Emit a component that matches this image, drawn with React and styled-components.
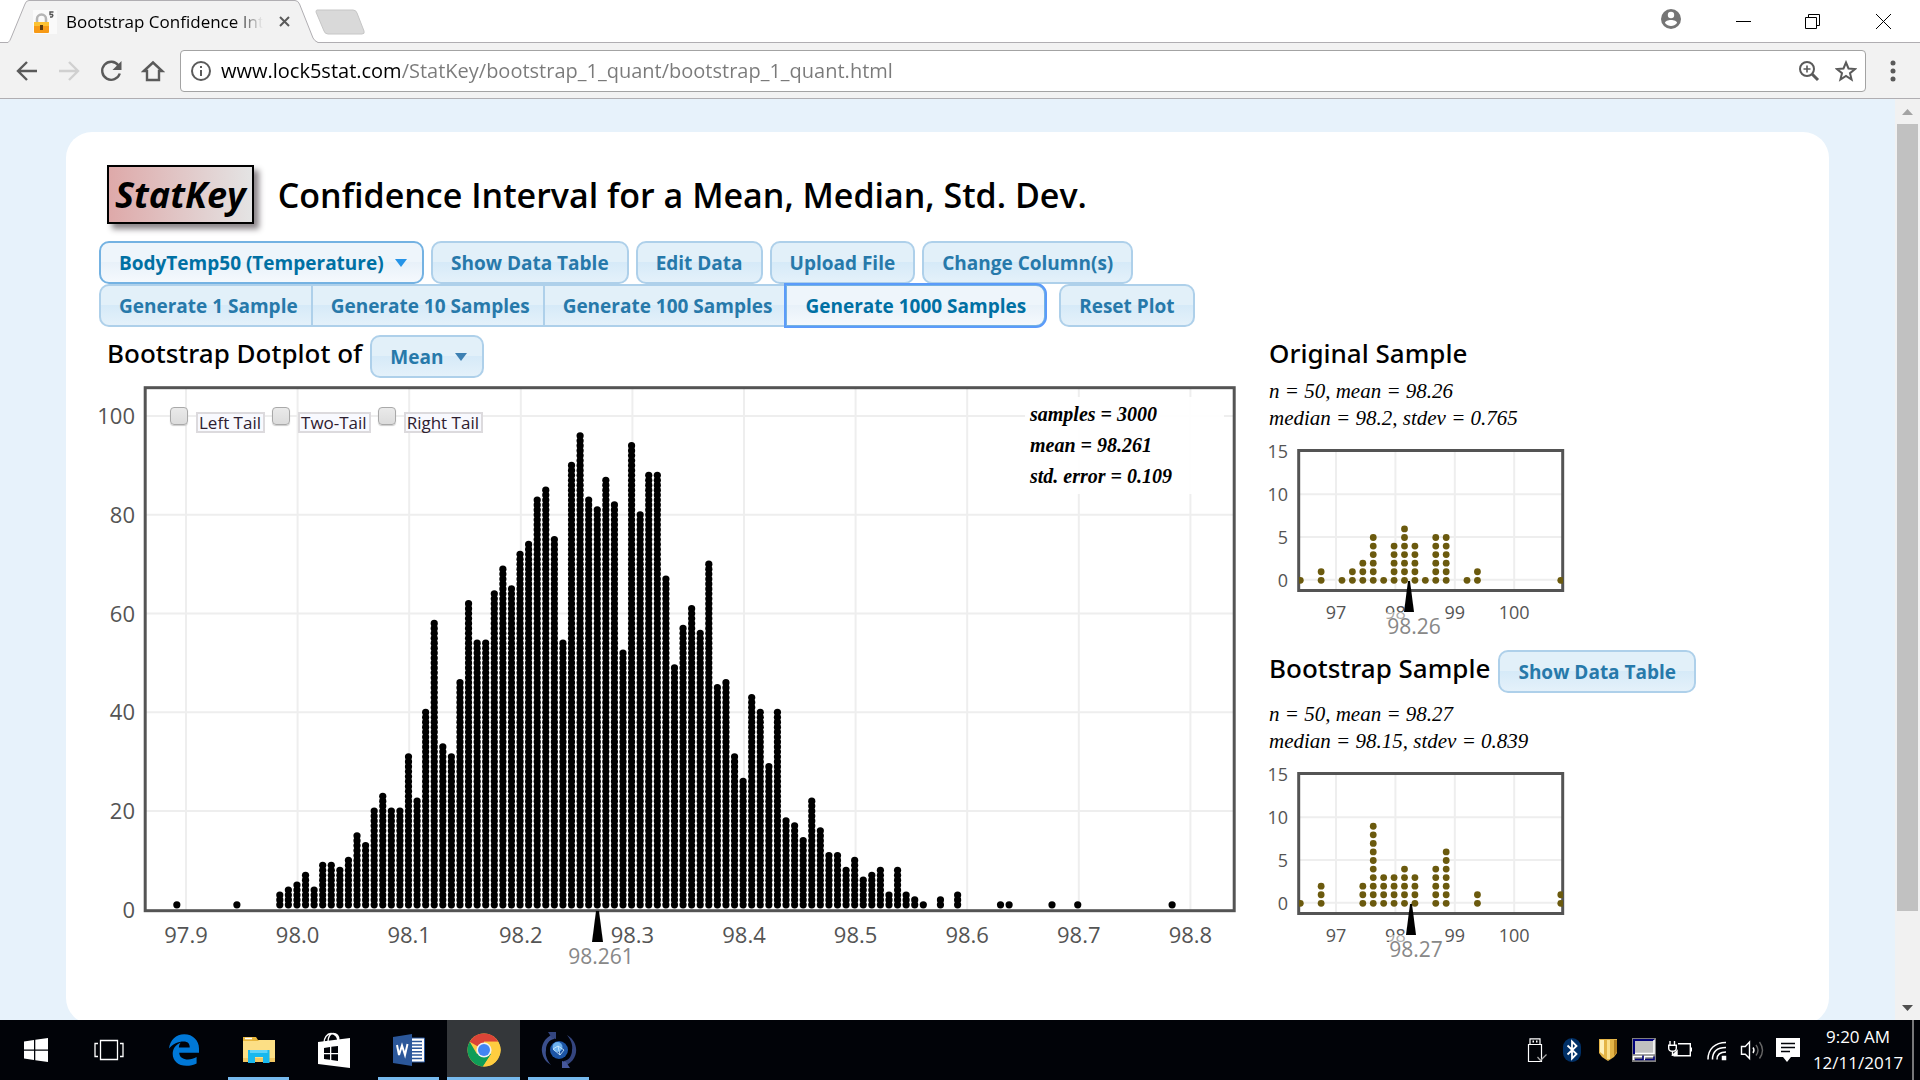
import React from "react";
import styled, { createGlobalStyle, css } from "styled-components";

const SANS = '"Open Sans", "Noto Sans", sans-serif';
const SERIF = '"Liberation Serif", "DejaVu Serif", serif';

const GlobalStyle = createGlobalStyle`
  * { box-sizing: border-box; }
  body { margin: 0; font-family: ${SANS}; color: #000; }
  button, input, select { font: inherit; margin: 0; }
  svg { display: block; flex: none; }
`;

const Desktop = styled.div`
  display: flex;
  flex-direction: column;
  height: 100vh;
  overflow: hidden;
  background: #fff;
`;

/* ---------- browser frame ---------- */

const TabStrip = styled.header`
  display: flex;
  align-items: flex-start;
  justify-content: space-between;
  height: 43px;
  flex: none;
  background: linear-gradient(#b0aeb2, #b0aeb2) bottom / 100% 1px no-repeat, #fff;
`;

const TabArea = styled.div`
  display: flex;
  align-items: flex-start;
`;

const Tab = styled.div`
  display: grid;
  grid-template-columns: minmax(0, 1fr);
  width: 310px;
  margin-left: 8px;
  > * { grid-area: 1 / 1; }
`;

const TabBody = styled.div`
  display: flex;
  align-items: center;
  height: 43px;
  padding: 0 24px 0 25px;
`;

const TabTitle = styled.span`
  flex: 1;
  min-width: 0;
  margin: 0 11px 0 9px;
  overflow: hidden;
  white-space: nowrap;
  font-size: 17px;
  line-height: 24px;
  mask-image: linear-gradient(90deg, #000 85%, transparent 100%);
`;

const PlainButton = styled.button`
  display: flex;
  align-items: center;
  justify-content: center;
  flex: none;
  width: ${(p) => p.$w || 42}px;
  height: ${(p) => p.$h || 42}px;
  padding: 0;
  border: 0;
  background: transparent;
`;

const WindowControls = styled.div`
  display: flex;
`;

const Toolbar = styled.nav`
  display: flex;
  align-items: center;
  flex: none;
  height: 56px;
  padding: 0 6px;
  background: #f2f2f2;
  border-bottom: 1px solid #b0aeb2;
`;

const Omnibox = styled.div`
  display: flex;
  align-items: center;
  flex: 1;
  height: 42px;
  margin: 0 6px;
  padding: 0 1px 0 8px;
  background: #fff;
  border: 1px solid #a3a3a3;
  border-radius: 4px;
`;

const Address = styled.input`
  flex: 1;
  min-width: 0;
  height: 36px;
  margin-left: 8px;
  padding: 0;
  border: 0;
  outline: 0;
  font-size: 20px;
  color: #767676;
  background: linear-gradient(90deg, #000 179px, #7a7a7a 179px);
  background-clip: text;
  -webkit-text-fill-color: transparent;
`;

/* ---------- page ---------- */

const Viewport = styled.div`
  display: flex;
  flex: 1;
  min-height: 0;
  overflow: hidden;
  background: #e7f2fb;
`;

const Page = styled.main`
  flex: 1;
  min-width: 0;
  padding: 33px 66px;
`;

const Card = styled.div`
  padding: 33px 0 50px 33px;
  background: #fff;
  border-radius: 26px;
`;

const ScrollBar = styled.div`
  display: flex;
  flex-direction: column;
  width: 25px;
  flex: none;
  background: #f1f1f1;
`;

const ScrollTrack = styled.div`
  flex: 1;
  padding: 0 2px;
`;

const ScrollThumb = styled.div`
  height: calc(100% - 84px);
  background: #c1c1c1;
`;

const Heading = styled.div`
  display: flex;
  align-items: center;
  gap: 24px;
  padding-left: 8px;
  margin-bottom: 17px;
`;

const Logo = styled.a`
  padding: 0 6px;
  border: 2px solid #000;
  background: linear-gradient(90deg, #dea9a9, #e4e4e4);
  box-shadow: 5px 5px 6px #8a8488;
  font-size: 36px;
  font-weight: 700;
  font-style: italic;
  line-height: 55px;
  color: #000;
  text-decoration: none;
`;

const Title = styled.h1`
  margin: 0;
  font-size: 34px;
  line-height: 46px;
  font-weight: 600;
`;

const ButtonRow = styled.div`
  display: flex;
  gap: ${(p) => p.$gap || 0}px;
`;

const controlLook = css`
  height: 43px;
  border: 2px solid ${(p) => (p.$active ? "#74b2e2" : "#aed0ea")};
  border-radius: 10px;
  background: ${(p) =>
    p.$active
      ? "linear-gradient(#eef5fb 50%, #e8f1f9 50%, #f5f9fd)"
      : "linear-gradient(#e2f0f9 50%, #d6eaf8 50%, #e4f1fa)"};
  color: ${(p) => (p.$active ? "#0070a3" : "#2779aa")};
  font-size: 19px;
  font-weight: 700;
  white-space: nowrap;
`;

const UiButton = styled.button`
  ${controlLook}
  padding: 0 18px;
`;

const GroupButton = styled(UiButton)`
  padding: 0 13px 0 18px;
  border-radius: 0;
  border-right-width: 0;
  &:first-child { border-radius: 10px 0 0 10px; }
  &:nth-child(4) {
    padding: 0 18px;
    border-right-width: 2px;
    border-radius: 0 10px 10px 0;
    outline: ${(p) => (p.$active ? "2px solid #5b9bfa" : "none")};
    outline-offset: -1px;
    margin-right: 13px;
  }
`;

const SelectBox = styled.span`
  display: inline-grid;
  align-items: center;
  > * { grid-area: 1 / 1; }
  > svg { justify-self: end; margin-right: 17px; pointer-events: none; }
`;

const UiSelect = styled.select`
  ${controlLook}
  appearance: none;
  padding: 0 38px 0 18px;
`;

const Columns = styled.div`
  display: grid;
  grid-template-columns: minmax(0, 1fr) 560px;
  margin-top: 8px;
  padding-left: 1px;
`;

const SectionHead = styled.div`
  display: flex;
  align-items: center;
  gap: 8px;
  height: 43px;
  padding-left: ${(p) => p.$inset || 0}px;
  margin-top: ${(p) => p.$top || 0}px;
`;

const SectionTitle = styled.h2`
  margin: 0;
  padding-bottom: 8px;
  font-family: "Noto Sans", sans-serif;
  font-size: 26px;
  line-height: 36px;
  font-weight: 500;
`;

const SampleStats = styled.p`
  margin: ${(p) => p.$top || 0}px 0 0;
  font: italic 21px/27px ${SERIF};
`;

const PlotArea = styled.div`
  position: relative;
  margin-top: 6px;
`;

const PlotSvg = styled.svg`
  width: 100%;
  height: auto;
  overflow: visible;
  font-family: ${SANS};
`;

const SampleSvg = styled.svg`
  overflow: visible;
  font-family: ${SANS};
`;

const TailRow = styled.div`
  position: absolute;
  left: 70px;
  top: 23px;
  display: flex;
  align-items: flex-start;
`;

const TailCheck = styled.input`
  appearance: none;
  width: 18px;
  height: 18px;
  border: 1px solid #a9a9a9;
  border-radius: 4px;
  background: linear-gradient(#eaeaea, #dcdcdc);
  box-shadow: 0 1px 1px #ccc;
`;

const TailLabel = styled.label`
  margin: 5px 7px 0 8px;
  padding: 0 2px 0 1px;
  border: 2px solid #dcdadd;
  background: #f8f9fe;
  color: #2e2030;
  font-size: 17px;
  line-height: 17px;
`;

const StatBox = styled.div`
  position: absolute;
  left: 925px;
  top: 13px;
  width: 199px;
  padding: 2px 5px;
  background: rgba(255, 255, 255, 0.9);
  font: italic bold 20px/31px ${SERIF};
`;

/* ---------- task bar ---------- */

const TaskBar = styled.footer`
  display: flex;
  justify-content: space-between;
  flex: none;
  height: 60px;
  background: #010308;
`;

const TaskGroup = styled.div`
  display: flex;
  align-items: stretch;
`;

const TaskButton = styled.button`
  display: grid;
  place-items: center;
  width: ${(p) => p.$w || 75}px;
  height: 60px;
  padding: 0;
  border: 0;
  background: ${(p) => {
    const line = "linear-gradient(#76b9ed, #76b9ed) center bottom";
    if (p.$state === "active") return `${line} / 73px 3px no-repeat, linear-gradient(#34373a, #34373a) center / 73px 60px no-repeat`;
    if (p.$state === "open") return `${line} / 61px 3px no-repeat`;
    return "transparent";
  }};
`;

const Tray = styled.div`
  display: flex;
  align-items: center;
  gap: 12px;
`;

const Clock = styled.time`
  width: 108px;
  margin-left: 4px;
  color: #fff;
  font-size: 17px;
  line-height: 26px;
  text-align: center;
  white-space: pre-line;
`;

const ShowDesktop = styled.button`
  width: 8px;
  padding: 0;
  border: 0;
  border-left: 2px solid #77787a;
  background: transparent;
`;

/* ---------- data ---------- */

const COLUMNS = [
  3, 4, 5, 7, 4, 9, 9, 8, 10, 15, 13, 20, 23, 20, 20, 31, 22, 40, 58, 33, 31, 46, 62, 54, 54,
  64, 69, 65, 72, 74, 83, 85, 75, 54, 90, 96, 83, 81, 87, 82, 52, 94, 80, 88, 88, 67, 49, 57,
  61, 56, 70, 45, 46, 31, 26, 43, 40, 29, 40, 18, 17, 14, 22, 16, 11, 11, 8, 10, 6, 7, 8, 3, 8,
  3, 2, 1, 0, 2, 0, 3,
];
const OUTLIERS = [-12, -5, 84, 85, 90, 93, 104];
const STACKS = COLUMNS.map((n, i) => [i, n]).concat(OUTLIERS.map((i) => [i, 1]));

const ORIGINAL = { 0: 1, 2: 2, 4: 1, 5: 2, 6: 3, 7: 6, 8: 1, 9: 5, 10: 7, 11: 5, 12: 1, 13: 6, 14: 6, 16: 1, 17: 2, 25: 1 };
const BOOTSTRAP = { 0: 1, 2: 3, 6: 3, 7: 10, 8: 4, 9: 4, 10: 5, 11: 4, 13: 5, 14: 7, 17: 2, 25: 2 };

const range = (n) => Array.from({ length: n }, (_, i) => i);

/* ---------- charts ---------- */

function DotPlot() {
  const x = (i) => 86 + i * 111.6;
  const y = (v) => 525.8 - v * 4.937;
  return (
    <PlotSvg viewBox="0 0 1169 590" role="img" aria-label="Bootstrap dotplot">
      <g stroke="#eeeeee" strokeWidth="2">
        {range(10).map((i) => <path key={i} d={`M${x(i)} 4V526`} />)}
        {range(5).map((i) => <path key={i} d={`M45 ${y(20 * i + 20)}H1134`} />)}
      </g>
      <rect x="45.2" y="3.7" width="1089" height="523" fill="none" stroke="#545454" strokeWidth="3" />
      <g fill="#000">
        {STACKS.map(([i, n]) =>
          range(n).map((k) => <circle key={`${i}/${k}`} cx={179.8 + i * 8.58} cy={y(k + 1)} r="3.6" />)
        )}
      </g>
      <g fill="#545454" fontSize="22">
        {range(10).map((i) => (
          <text key={i} x={x(i)} y="559" textAnchor="middle">{(97.9 + i / 10).toFixed(1)}</text>
        ))}
        {range(6).map((i) => (
          <text key={i} x="35" y={y(20 * i) + 8} textAnchor="end">{20 * i}</text>
        ))}
      </g>
      <path d="M496 527h3l4 31h-11z" fill="#000" />
      <text x="501" y="580" fontSize="21" textAnchor="middle" fill="#888">98.261</text>
    </PlotSvg>
  );
}

function SamplePlot({ name, stacks, mean, at }) {
  const x = (i) => 67 + i * 59.4;
  const y = (v) => 147.8 - v * 8.56;
  return (
    <SampleSvg width="320" height="210" viewBox="0 0 320 210" role="img" aria-label={name}>
      <clipPath id={`${name}-clip`}><rect x="30" y="17" width="264" height="142" /></clipPath>
      <g stroke="#eeeeee" strokeWidth="2">
        {range(4).map((i) => <path key={i} d={`M${x(i)} 18V158`} />)}
        {range(3).map((i) => <path key={i} d={`M30 ${y(5 * i)}H294`} />)}
      </g>
      <rect x="29.7" y="18.5" width="264" height="140" fill="none" stroke="#545454" strokeWidth="3" />
      <g fill="#6b5a0e" clipPath={`url(#${name}-clip)`}>
        {Object.entries(stacks).map(([i, n]) =>
          range(n).map((k) => <circle key={`${i}/${k}`} cx={31.3 + i * 10.42} cy={y(k) + 0.5} r="3.4" />)
        )}
      </g>
      <g fill="#545454" fontSize="18">
        {range(4).map((i) => (
          <text key={i} x={x(i)} y="187" textAnchor="middle">{97 + i}</text>
        ))}
        {range(4).map((i) => (
          <text key={i} x="19" y={y(5 * i) + 7} textAnchor="end">{5 * i}</text>
        ))}
      </g>
      <rect x={at - 22} y="180" width="52" height="24" fill="#fff" opacity="0.5" />
      <path d={`M${at - 1} 149h2l4 31h-10z`} fill="#000" />
      <text x={at + 5} y="202" fontSize="21" textAnchor="middle" fill="#888">{mean}</text>
    </SampleSvg>
  );
}

const Caret = ({ color }) => (
  <svg width="12" height="8" viewBox="0 0 12 8"><path d="M0 0h12L6 8z" fill={color} /></svg>
);

/* ---------- browser icons ---------- */

const NavIcon = ({ d, color = "#5a5a5a", width = 2.4 }) => (
  <svg width="24" height="24" viewBox="0 0 24 24" fill="none" stroke={color} strokeWidth={width}><path d={d} /></svg>
);

const LockIcon = () => (
  <svg width="24" height="24" viewBox="0 0 24 24">
    <rect width="24" height="24" fill="#fafafa" />
    <path d="M4 14V9a4.500 4.500 0 0 1 9 0v5" fill="none" stroke="#b5b5b5" strokeWidth="2.500" />
    <rect x="1" y="12" width="15" height="11" rx="1" fill="#f79a16" />
    <rect x="1" y="12" width="15" height="4" fill="#fcc233" />
    <path d="M8.500 15v5" stroke="#5a3a10" strokeWidth="3" />
    <path d="M20.500 2H17v2.500h2.500q1 1.200-.5 2.500h-2" fill="none" stroke="#555" strokeWidth="1.400" />
  </svg>
);

/* ---------- task bar icons ---------- */

const StartIcon = () => (
  <svg width="24" height="24" viewBox="0 0 24 24" fill="#fff">
    <path d="M0 3.400 10 2v9.400H0zM11.300 1.800 24 0v11.400H11.300zM0 12.700h10V22L0 20.600zM11.300 12.700H24V24l-12.700-1.800z" />
  </svg>
);
const TaskViewIcon = () => (
  <svg width="30" height="22" viewBox="0 0 30 22" fill="none" stroke="#fff" strokeWidth="1.300">
    <path d="M6.500 1.500h17v19h-17zM4 4.500H1v13h3M26 4.500h3v13h-3" />
  </svg>
);
const EdgeIcon = () => (
  <svg width="32" height="32" viewBox="0 0 32 32">
    <path d="M1 14.500C2 6 8 .3 16.200 .3 25 .3 31 6.600 31 14.500v4.200H11.200c.2 4.500 4 6.800 8.800 6.800 3 0 6-.9 8.600-2.400v6.300c-3 1.700-6.600 2.400-10.200 2.400C10.400 31.800 4.700 27 4.700 20c0-5.500 3-9.300 8-11.500-1.300 1.500-1.700 3.200-1.800 5h10.800c0-4-2-6-6-6-5.500 0-11 2.600-14.700 7z" fill="#0078d7" />
  </svg>
);
const FolderIcon = () => (
  <svg width="32" height="28" viewBox="0 0 32 28">
    <path d="M0 1h13l2 3h17v5H0z" fill="#e8b63c" />
    <path d="M0 5h15l1-1h16v22H0z" fill="#fcdf85" />
    <path d="M2 2.500h7" stroke="#fff" strokeWidth="1.500" />
    <path d="M0 22h32v4H0z" fill="#f2c862" />
    <path d="M5 14h21.500v13H20v-6h-8v6H5z" fill="#18b8ee" />
    <path d="M7 14h17.500v3H7z" fill="#5fd3fa" />
  </svg>
);
const StoreIcon = () => (
  <svg width="32" height="36" viewBox="0 0 32 36">
    <path d="M6 11c0-5 3-9.500 7-9.500S20 5 20 9M10 10c0-5 2-8.500 5-8.500 4 0 6 3 6 7" fill="none" stroke="#fff" strokeWidth="1.400" />
    <path d="M0 10 32 6v30L0 32z" fill="#fff" />
    <path d="M6 16l6-1v6H6zM13.300 14.800 20 14v7h-6.700zM6 22.300h6v5.500l-6-.8zM13.300 22.300H20V29l-6.700-1z" fill="#010308" />
  </svg>
);
const WordIcon = () => (
  <svg width="32" height="32" viewBox="0 0 32 32">
    <path d="M17 4h14.500v24H17z" fill="#fff" stroke="#2b579a" />
    <path d="M19 7.500h10M19 10.900h10M19 14.300h10M19 17.700h10M19 21.100h10M19 24.500h10" stroke="#2b579a" strokeWidth="1.500" />
    <path d="M0 3 19 0v32L0 29z" fill="#2b579a" />
    <path d="m4 11 2 10 3-9.500 3 9.500 2.500-11" fill="none" stroke="#fff" strokeWidth="2" />
  </svg>
);
const ChromeIcon = () => (
  <svg width="34" height="34" viewBox="0 0 34 34">
    <circle cx="17" cy="17" r="16.500" fill="#fc4" />
    <path d="M17 17 2.700 8.700A16.500 16.500 0 0 1 31.300 8.700H17z" fill="#db4437" />
    <path d="M2.700 8.700A16.500 16.500 0 0 0 16 33.500L24.200 21 17 17 9.800 20.800z" fill="#0f9d58" />
    <path d="M31.300 8.700H17l7.200 12.300L16 33.500A16.500 16.500 0 0 0 31.300 8.700z" fill="#ffcd40" />
    <circle cx="17" cy="17" r="7.600" fill="#f1f1f1" />
    <circle cx="17" cy="17" r="6" fill="#4285f4" />
  </svg>
);
const SyncIcon = () => (
  <svg width="36" height="36" viewBox="0 0 36 36">
    <path d="M12 2C3 6 0 14 1 20c1 6 4 10 9 13-4-5-6-10-5-15 0-6 3-10 8-11l1-5z" fill="#3b4f8c" />
    <path d="M7 0h8v7l-4-1z" fill="#33457f" />
    <path d="M24 34c9-4 12-12 11-18-1-6-4-10-9-13 4 5 6 10 5 15 0 6-3 10-8 11l-1 5z" fill="#34457f" />
    <path d="M29 36h-8v-7l4 1z" fill="#46579b" />
    <circle cx="18" cy="18" r="9" fill="#1c55a5" />
    <circle cx="16.500" cy="15" r="5" fill="#6db2ee" />
    <path d="m12 17 5-3 6 4-4 5zM17 14l2 9" fill="none" stroke="#d5efff" strokeWidth=".8" />
  </svg>
);

const TRAY_ICONS = [
  ["USB device", <g key="u" fill="none" stroke="#fff" strokeWidth="1.200"><path d="M6 6.500V.8h10v5.700M4.500 6.500h13v17h-13z" /><path d="M8.500 3.500h1.500M12 3.500h1.500" strokeWidth="1.800" /><path d="m13.500 19 3 3.500 6-6" stroke="#aaa" /></g>],
  ["Bluetooth", <g key="b"><rect x="3" y="0" width="18" height="24" rx="9" fill="#003067" /><path d="m7.500 7.500 9 8.500-4.500 4.500v-17L16.500 8l-9 8.500" fill="none" stroke="#fff" strokeWidth="1.800" /></g>],
  ["Security", <g key="s"><path d="M3 1h18v14l-3 4-6 4-6-4-3-4z" fill="#e4b548" /><path d="M4 2h4v15l-4-3z" fill="#fff0b8" /><path d="M11 2h3v19h-3z" fill="#fbe08c" /><path d="M18 2h3v12l-3 4z" fill="#b27f20" /></g>],
  ["Touchpad", <g key="t"><rect width="24" height="24" fill="#808080" /><path d="M1.500 1.500h21V16h-21z" fill="#c0c0c0" /><path d="M2 16V2h20" fill="none" stroke="#00007b" strokeWidth="2" /><path d="M22 2v13.500H3M1.500 22v-3.500h9M12.500 22v-3.500h9" fill="none" stroke="#fff" strokeWidth="1.500" /><path d="M3 21.500h8v-4M13 21.500h9v-3" fill="none" stroke="#00007b" strokeWidth="1.500" /></g>],
  ["Battery", <g key="p" fill="none" stroke="#fff" strokeWidth="1.400"><path d="M10 5.700h12.300v12H5.500M23.500 9.500v4M2 3v4M6.500 3v4M.7 7.200h7.600v3q0 3-3.800 3T.7 10.200zM4.500 13v4.700" /><path d="m5 17 4-4v4z" fill="#fff" /></g>],
  ["Network", <g key="w" fill="none" stroke="#fff" strokeWidth="1.500"><path d="M4 21.500C4 11 11 4.500 22 4.500M8.500 21.500c0-8 5-12 13.500-12M13 21.500c0-5 3.500-7.500 9-7.500" /><path d="M18.500 18.500h3v3h-3z" fill="#fff" /></g>],
  ["Volume", <g key="v" fill="none" stroke="#fff" strokeWidth="1.400"><path d="M1.500 8.500h3.800L9.500 4v16.500l-4.200-4.300H1.500z" /><path d="M13 9.500q2 2.700 0 5.500" /><path d="M16 7q4 5.300 0 10.500M19.500 4q6 8.300 0 16.500" stroke="#666" /></g>],
  ["Notifications", <g key="n"><path d="M0 0h24v19H15l-4 5-4-5H0z" fill="#fff" /><path d="M5 5.500h14M5 9.500h14M5 13.500h9" stroke="#010308" strokeWidth="1.500" /></g>],
];

export default function App() {
  return (
    <Desktop>
      <GlobalStyle />
      <TabStrip>
        <TabArea>
          <Tab>
            <svg width="310" height="43" viewBox="0 0 310 43">
              <path d="M0 42.500Q2 41 3 38L17 4Q18 .5 21 .5H287Q290 .5 291.500 4L305 38Q306.500 41 310 42.500V43H0z" fill="#f2f2f2" />
              <path d="M0 42.500Q2 41 3 38L17 4Q18 .5 21 .5H287Q290 .5 291.500 4L305 38Q306.500 41 310 42.500" fill="none" stroke="#b0aeb2" />
            </svg>
            <TabBody>
              <LockIcon />
              <TabTitle>Bootstrap Confidence Int</TabTitle>
              <PlainButton aria-label="Close tab" $w={20} $h={24}>
                <svg width="11" height="11" viewBox="0 0 11 11"><path d="m1 1 9 9M10 1l-9 9" stroke="#5a5a5a" strokeWidth="2" /></svg>
              </PlainButton>
            </TabBody>
          </Tab>
          <PlainButton aria-label="New tab" $w={46} $h={44}>
            <svg width="52" height="26" viewBox="0 0 52 26"><path d="M2 1h36q3 0 4 3l7 18q1 3-2 3H13q-3 0-4-3L1 3Q1 1 2 1z" fill="#d9d9d9" stroke="#c6c6c6" /></svg>
          </PlainButton>
        </TabArea>
        <WindowControls>
          <PlainButton aria-label="User" $w={76} $h={37}>
            <svg width="20" height="20" viewBox="0 0 20 20">
              <circle cx="10" cy="10" r="10" fill="#757575" />
              <circle cx="10" cy="6" r="3.200" fill="#fff" />
              <path d="M4 14c0-4 12-4 12 0-3 4-9 4-12 0z" fill="#fff" />
            </svg>
          </PlainButton>
          <PlainButton aria-label="Minimize" $w={69}>
            <svg width="15" height="15" viewBox="0 0 15 15"><path d="M0 7.500h15" stroke="#000" /></svg>
          </PlainButton>
          <PlainButton aria-label="Restore" $w={69}>
            <svg width="15" height="15" viewBox="0 0 15 15" fill="none" stroke="#000"><path d="M.5 3.500h11v11H.5zM3.500 3.500v-3h11v11h-3" /></svg>
          </PlainButton>
          <PlainButton aria-label="Close" $w={73}>
            <svg width="15" height="15" viewBox="0 0 15 15"><path d="m0 0 15 15M15 0 0 15" stroke="#000" /></svg>
          </PlainButton>
        </WindowControls>
      </TabStrip>

      <Toolbar>
        <PlainButton aria-label="Back"><NavIcon d="M22 12H3M12 3l-9 9 9 9" /></PlainButton>
        <PlainButton aria-label="Forward"><NavIcon color="#d0d0d0" d="M2 12h19M12 3l9 9-9 9" /></PlainButton>
        <PlainButton aria-label="Reload">
          <svg width="24" height="24" viewBox="0 0 24 24"><path d="M19.500 6.500A9 9 0 1 0 20.800 14.500" fill="none" stroke="#5a5a5a" strokeWidth="2.400" /><path d="M22.500 2v9h-9z" fill="#5a5a5a" /></svg>
        </PlainButton>
        <PlainButton aria-label="Home"><NavIcon d="M2.800 12 12 3.500l9.200 8.500H18v9H6v-9z" /></PlainButton>
        <Omnibox>
          <svg width="24" height="24" viewBox="0 0 24 24" fill="none" stroke="#5a5a5a" strokeWidth="2"><circle cx="12" cy="12" r="9" /><path d="M12 11v6M12 7v2" /></svg>
          <Address aria-label="Address" size="60" defaultValue="www.lock5stat.com/StatKey/bootstrap_1_quant/bootstrap_1_quant.html" />
          <PlainButton aria-label="Zoom" $w={37} $h={36}>
            <svg width="22" height="22" viewBox="0 0 22 22" fill="none" stroke="#5a5a5a" strokeWidth="2"><circle cx="9" cy="9" r="7" /><path d="M9 5.500v7M5.500 9h7" strokeWidth="1.600" /><path d="m14 14 6 6" strokeWidth="3" /></svg>
          </PlainButton>
          <PlainButton aria-label="Bookmark" $w={37} $h={36}>
            <svg width="22" height="22" viewBox="0 0 22 22"><path d="m11 2.500 2.500 6 6.500.5-5 4.200 1.600 6.300L11 16l-5.600 3.500L7 13.200 2 9l6.500-.5z" fill="none" stroke="#5a5a5a" strokeWidth="2" /></svg>
          </PlainButton>
        </Omnibox>
        <PlainButton aria-label="Menu">
          <svg width="6" height="22" viewBox="0 0 6 22" fill="#5a5a5a"><circle cx="3" cy="3" r="2.500" /><circle cx="3" cy="11" r="2.500" /><circle cx="3" cy="19" r="2.500" /></svg>
        </PlainButton>
      </Toolbar>

      <Viewport>
        <Page>
          <Card>
            <Heading>
              <Logo href="#statkey">StatKey</Logo>
              <Title>Confidence Interval for a Mean, Median, Std. Dev.</Title>
            </Heading>
            <ButtonRow $gap={7}>
              <SelectBox>
                <UiSelect $active aria-label="Data set"><option>BodyTemp50 (Temperature)</option></UiSelect>
                <Caret color="#2694e8" />
              </SelectBox>
              <UiButton>Show Data Table</UiButton>
              <UiButton>Edit Data</UiButton>
              <UiButton>Upload File</UiButton>
              <UiButton>Change Column(s)</UiButton>
            </ButtonRow>
            <ButtonRow>
              <GroupButton>Generate 1 Sample</GroupButton>
              <GroupButton>Generate 10 Samples</GroupButton>
              <GroupButton>Generate 100 Samples</GroupButton>
              <GroupButton $active>Generate 1000 Samples</GroupButton>
              <UiButton>Reset Plot</UiButton>
            </ButtonRow>

            <Columns>
              <section>
                <SectionHead $inset={7}>
                  <SectionTitle>Bootstrap Dotplot of</SectionTitle>
                  <SelectBox>
                    <UiSelect aria-label="Statistic"><option>Mean</option></UiSelect>
                    <Caret color="#3d80b3" />
                  </SelectBox>
                </SectionHead>
                <PlotArea>
                  <DotPlot />
                  <TailRow>
                    {["Left Tail", "Two-Tail", "Right Tail"].map((name) => (
                      <React.Fragment key={name}>
                        <TailCheck type="checkbox" id={name.replace(" ", "-")} />
                        <TailLabel htmlFor={name.replace(" ", "-")}>{name}</TailLabel>
                      </React.Fragment>
                    ))}
                  </TailRow>
                  <StatBox>
                    <div>samples = 3000</div>
                    <div>mean = 98.261</div>
                    <div>std. error = 0.109</div>
                  </StatBox>
                </PlotArea>
              </section>
              <section>
                <SectionHead><SectionTitle>Original Sample</SectionTitle></SectionHead>
                <SampleStats>n = 50, mean = 98.26<br />median = 98.2, stdev = 0.765</SampleStats>
                <SamplePlot name="original-sample" stacks={ORIGINAL} mean="98.26" at={140} />
                <SectionHead $top={8}>
                  <SectionTitle>Bootstrap Sample</SectionTitle>
                  <UiButton>Show Data Table</UiButton>
                </SectionHead>
                <SampleStats $top={8}>n = 50, mean = 98.27<br />median = 98.15, stdev = 0.839</SampleStats>
                <SamplePlot name="bootstrap-sample" stacks={BOOTSTRAP} mean="98.27" at={142} />
              </section>
            </Columns>
          </Card>
        </Page>
        <ScrollBar>
          <PlainButton aria-label="Scroll up" $w={25} $h={25}>
            <svg width="11" height="6" viewBox="0 0 11 6"><path d="M0 6h11L5.500 0z" fill="#a3a3a3" /></svg>
          </PlainButton>
          <ScrollTrack><ScrollThumb /></ScrollTrack>
          <PlainButton aria-label="Scroll down" $w={25} $h={25}>
            <svg width="11" height="6" viewBox="0 0 11 6"><path d="M0 0h11L5.500 6z" fill="#505050" /></svg>
          </PlainButton>
        </ScrollBar>
      </Viewport>

      <TaskBar>
        <TaskGroup>
          <TaskButton $w={72} aria-label="Start"><StartIcon /></TaskButton>
          <TaskButton $w={74} aria-label="Task view"><TaskViewIcon /></TaskButton>
          <TaskButton aria-label="Edge"><EdgeIcon /></TaskButton>
          <TaskButton aria-label="File Explorer" $state="open"><FolderIcon /></TaskButton>
          <TaskButton aria-label="Store"><StoreIcon /></TaskButton>
          <TaskButton aria-label="Word" $state="open"><WordIcon /></TaskButton>
          <TaskButton aria-label="Chrome" $state="active"><ChromeIcon /></TaskButton>
          <TaskButton aria-label="Sync" $state="open"><SyncIcon /></TaskButton>
        </TaskGroup>
        <TaskGroup>
          <Tray>
            {TRAY_ICONS.map(([label, art]) => (
              <svg key={label} width="24" height="24" viewBox="0 0 24 24" role="img" aria-label={label}>{art}</svg>
            ))}
          </Tray>
          <Tray><Clock>{"9:20 AM\n12/11/2017"}</Clock></Tray>
          <ShowDesktop aria-label="Show desktop" />
        </TaskGroup>
      </TaskBar>
    </Desktop>
  );
}
